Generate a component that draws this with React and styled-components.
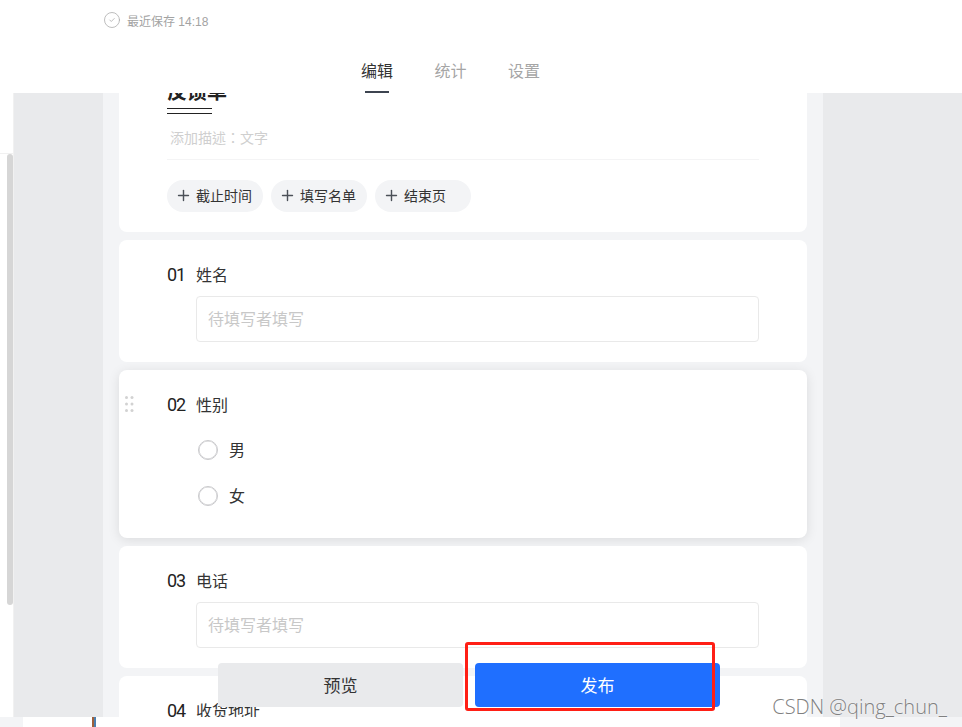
import React from 'react';
import styled, { createGlobalStyle } from 'styled-components';
import { CircleCheck, Plus } from 'lucide-react';

const GlobalStyle = createGlobalStyle`
  html, body { margin: 0; padding: 0; background: #fff; }
  body { font-family: "Liberation Sans", "Noto Sans CJK SC", sans-serif; color: #333; }
  * { box-sizing: border-box; }
`;

const Page = styled.div`
  position: relative;
  width: 962px;
  height: 727px;
  overflow: hidden;
  display: flex;
  flex-direction: column;
  background: #fff;
`;

const Header = styled.header`
  flex: none;
  height: 93px;
  background: #fff;
`;

const SaveRow = styled.div`
  height: 42px;
  padding: 0 0 2px 103px;
  display: flex;
  align-items: center;
  gap: 6px;
  font-size: 12px;
  color: #a3a3a3;
  svg { color: #a8a8a8; }
`;

const Tabs = styled.nav`
  display: flex;
  padding-left: 361px;
  gap: 41.5px;
  padding-top: 18px;
`;

const Tab = styled.div`
  display: flex;
  flex-direction: column;
  align-items: center;
  font-size: 16px;
  line-height: 24px;
  color: ${p => (p.$active ? '#333' : '#a5a5a5')};
  &::after {
    content: '';
    width: 24px;
    height: 2px;
    margin-top: 7px;
    background: ${p => (p.$active ? '#3d4450' : 'transparent')};
  }
`;

const Workspace = styled.div`
  flex: none;
  height: 624px;
  display: flex;
  background: #e9eaec;
`;

const LeftRail = styled.aside`
  flex: none;
  width: 14px;
  background: #fff;
  border-right: 1px solid #f1f1f1;
`;

const RailTop = styled.div`
  height: 61px;
  border-bottom: 1px solid #f1f1f1;
`;

const RailThumb = styled.div`
  width: 6px;
  height: 451px;
  margin-left: 7px;
  border-radius: 3px;
  background: #d6d6d6;
`;

const Canvas = styled.main`
  flex: none;
  width: 720px;
  margin-left: 89px;
  padding: 0 16px;
  background: #f3f4f6;
  overflow: hidden;
  display: flex;
  flex-direction: column;
  gap: 8px;
`;

const Card = styled.section`
  position: relative;
  flex: none;
  padding: ${p => (p.$head ? '15px' : '23px')} 48px 20px;
  margin-top: ${p => (p.$head ? '-30px' : '0')};
  background: #fff;
  border-radius: 8px;
  box-shadow: ${p => (p.$focused ? '0 2px 12px rgba(0, 0, 0, 0.1)' : 'none')};
`;

const FormTitle = styled.h1`
  margin: 0;
  font-size: 20px;
  line-height: 28px;
  font-weight: 700;
  color: #222;
`;

const TitleRule = styled.div`
  width: 45px;
  height: 6px;
  margin-top: 2px;
  border-top: 1px solid #222;
  border-bottom: 1px solid #222;
`;

const FormDesc = styled.div`
  margin-top: 13px;
  padding-left: 3px;
  font-family: "Noto Sans CJK TC", sans-serif;
  font-size: 14px;
  line-height: 20px;
  color: #cfcfcf;
`;

const Divider = styled.div`
  margin-top: 12px;
  height: 1px;
  background: #f4f4f5;
`;

const ChipRow = styled.div`
  margin-top: 20px;
  display: flex;
  gap: 8px;
`;

const Chip = styled.div`
  width: 96px;
  height: 32px;
  padding: 0 0 2px 8px;
  display: flex;
  align-items: center;
  gap: 4px;
  border-radius: 16px;
  background: #f3f4f6;
  font-size: 14px;
  color: #333;
  svg { color: #4b5058; }
`;

const QuestionHead = styled.div`
  display: flex;
  align-items: center;
  height: 24px;
  padding-bottom: 2px;
  font-size: 16px;
  color: #333;
`;

const QuestionNo = styled.span`
  width: 29px;
  font-family: Roboto, "Liberation Sans", sans-serif;
  font-size: 18px;
  letter-spacing: -1px;
  color: #222;
`;

const AnswerBox = styled.div`
  height: 46px;
  margin: 9px 0 0 29px;
  padding: 0 0 2px 11px;
  display: flex;
  align-items: center;
  border: 1px solid #e9e9e9;
  border-radius: 4px;
  font-size: 16px;
  color: #c8c8c8;
`;

const OptionList = styled.div`
  margin-top: 9px;
  padding-left: 31px;
`;

const Option = styled.div`
  height: 46px;
  display: flex;
  align-items: center;
  gap: 11px;
  font-size: 16px;
  color: #333;
`;

const Radio = styled.span`
  width: 20px;
  height: 20px;
  margin-top: 2px;
  border-radius: 50%;
  border: 1px solid #c9c9cc;
  box-shadow: inset 0 0 0 0.5px #c9c9cc;
`;

const DragHandle = styled.svg`
  position: absolute;
  left: 6px;
  top: 26px;
`;

const ActionBar = styled.div`
  position: absolute;
  left: 218px;
  top: 663px;
  display: flex;
  gap: 12px;
`;

const ActionButton = styled.button`
  width: 245px;
  height: 44px;
  padding: 0 0 2px;
  border: 0;
  border-radius: 4px;
  font-family: inherit;
  font-size: 17px;
  background: ${p => (p.$primary ? '#1f6fff' : '#e9eaec')};
  color: ${p => (p.$primary ? '#fff' : '#333')};
`;

const RedMark = styled.div`
  position: absolute;
  left: 465px;
  top: 642px;
  width: 250px;
  height: 69px;
  border: 3px solid #ff1f15;
  border-radius: 3px;
`;

const Watermark = styled.div`
  position: absolute;
  right: 15px;
  top: 694px;
  font-family: "Open Sans", sans-serif;
  font-size: 20px;
  font-weight: 300;
  line-height: 26px;
  color: #808080;
  text-shadow: 0 0 2px #fff;
`;

const BottomStrip = styled.div`
  flex: 1;
  display: flex;
  background: #fff;
`;

const StripLeft = styled.div`
  width: 23px;
  background: #f3f4f6;
`;

const StripTick = styled.div`
  width: 4px;
  margin-left: 69px;
  background: linear-gradient(90deg, #a0603a 0 2.5px, #4a7fb0 2.5px);
`;

const StripRight = styled.div`
  width: 122px;
  margin-left: auto;
  background: #f3f4f6;
`;

const chips = ['截止时间', '填写名单', '结束页'];

const Question = ({ no, label, hint }) => (
  <Card>
    <QuestionHead>
      <QuestionNo>{no}</QuestionNo>
      {label}
    </QuestionHead>
    {hint && <AnswerBox>{hint}</AnswerBox>}
  </Card>
);

const App = () => {
  return (
    <Page>
      <GlobalStyle />
      <Header>
        <SaveRow>
          <CircleCheck size={18} strokeWidth={1} />
          最近保存 14:18
        </SaveRow>
        <Tabs>
          <Tab $active>编辑</Tab>
          <Tab>统计</Tab>
          <Tab>设置</Tab>
        </Tabs>
      </Header>

      <Workspace>
        <LeftRail>
          <RailTop />
          <RailThumb />
        </LeftRail>
        <Canvas>
          <Card $head>
            <FormTitle>反馈单</FormTitle>
            <TitleRule />
            <FormDesc>添加描述：文字</FormDesc>
            <Divider />
            <ChipRow>
              {chips.map(c => (
                <Chip key={c}>
                  <Plus size={17} strokeWidth={2} />
                  {c}
                </Chip>
              ))}
            </ChipRow>
          </Card>

          <Question no="01" label="姓名" hint="待填写者填写" />

          <Card $focused>
            <DragHandle width="9" height="17" viewBox="0 0 9 17" fill="#d2d2d2">
              <circle cx="1.5" cy="1.5" r="1.5" />
              <circle cx="7" cy="1.5" r="1.5" />
              <circle cx="1.5" cy="8" r="1.5" />
              <circle cx="7" cy="8" r="1.5" />
              <circle cx="1.5" cy="14.5" r="1.5" />
              <circle cx="7" cy="14.5" r="1.5" />
            </DragHandle>
            <QuestionHead>
              <QuestionNo>02</QuestionNo>
              性别
            </QuestionHead>
            <OptionList>
              <Option><Radio />男</Option>
              <Option><Radio />女</Option>
            </OptionList>
          </Card>

          <Question no="03" label="电话" hint="待填写者填写" />
          <Question no="04" label="收货地址" hint="待填写者填写" />
        </Canvas>
      </Workspace>

      <BottomStrip>
        <StripLeft />
        <StripTick />
        <StripRight />
      </BottomStrip>

      <ActionBar>
        <ActionButton>预览</ActionButton>
        <ActionButton $primary>发布</ActionButton>
      </ActionBar>
      <RedMark />
      <Watermark>CSDN @qing_chun_</Watermark>
    </Page>
  );
};

export default App;
